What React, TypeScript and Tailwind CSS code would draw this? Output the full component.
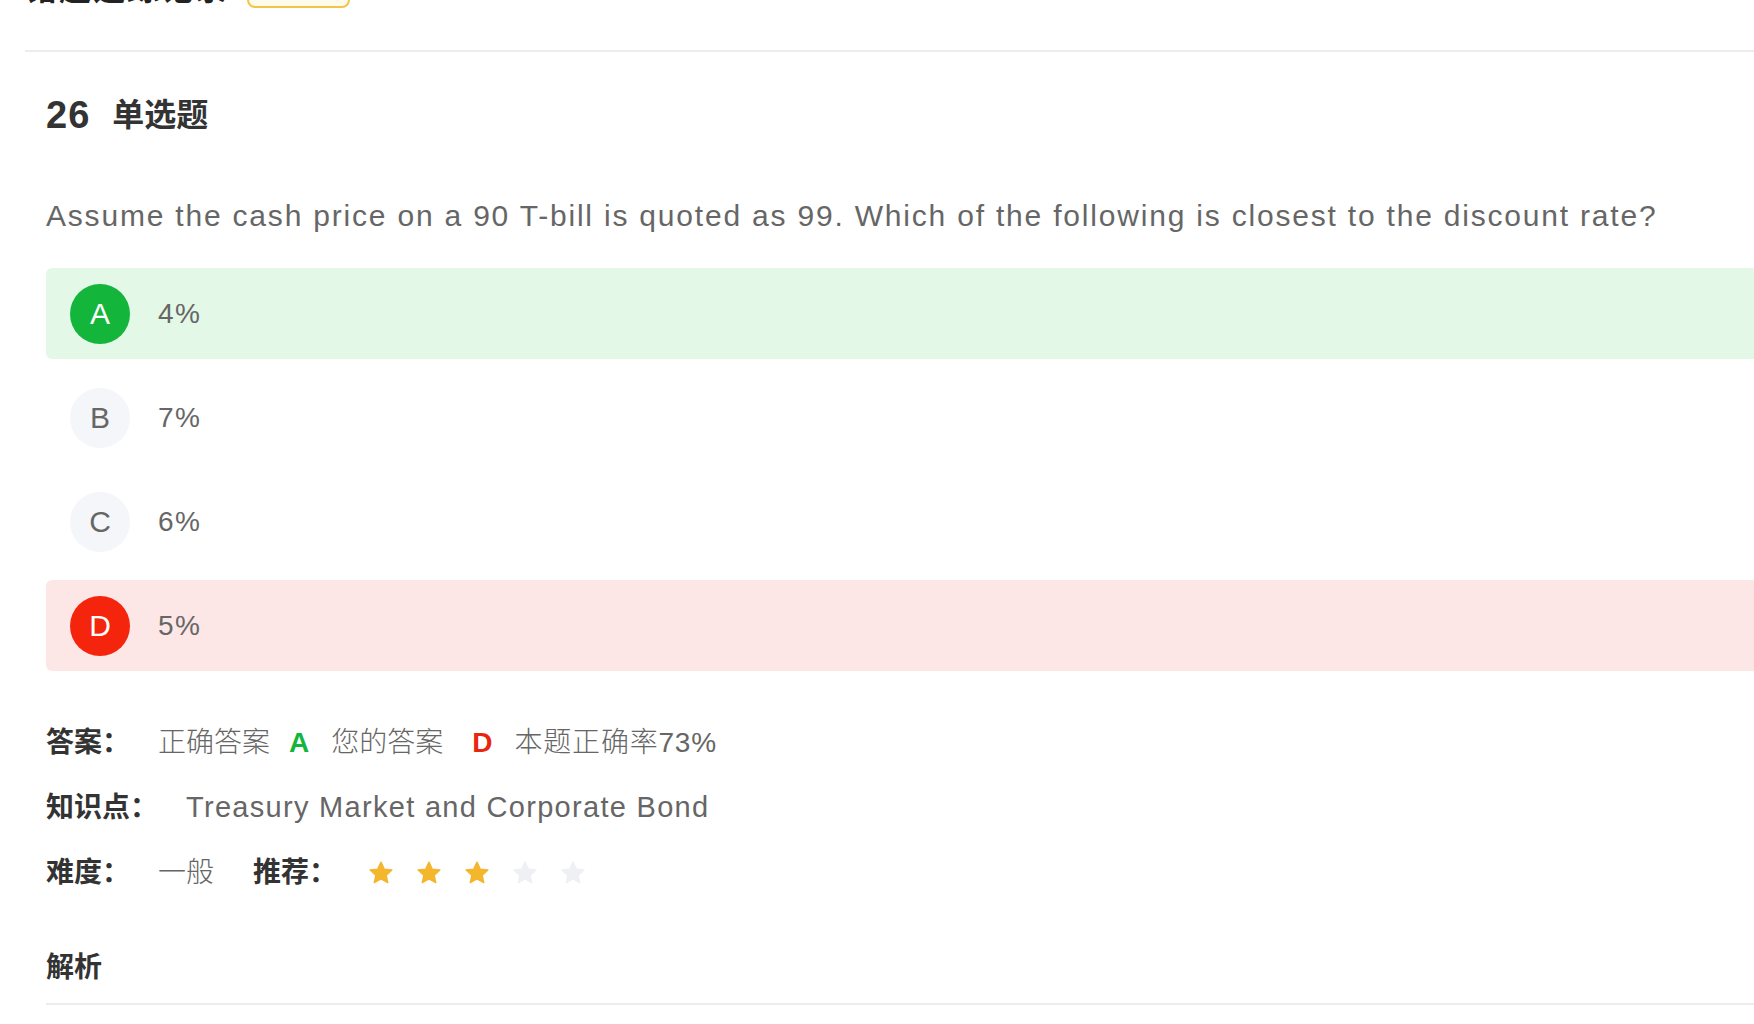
import React from "react";

interface Option {
  key: string;
  text: string;
  state: "correct" | "wrong" | "none";
}

const options: Option[] = [
  { key: "A", text: "4%", state: "correct" },
  { key: "B", text: "7%", state: "none" },
  { key: "C", text: "6%", state: "none" },
  { key: "D", text: "5%", state: "wrong" },
];

const font = {
  fontFamily: '"Liberation Sans", "Noto Sans CJK SC", sans-serif',
};

const Star = ({ on }: { on: boolean }) => (
  <svg width="28" height="28" viewBox="0 0 24 24" className="shrink-0">
    <path
      d="M12 2.6l2.75 6.05 6.6.72-4.93 4.46 1.38 6.5L12 17.05l-5.8 3.28 1.38-6.5-4.93-4.46 6.6-.72z"
      fill={on ? "#f4b62c" : "#eef0f4"}
      stroke={on ? "#f4b62c" : "#eef0f4"}
      strokeWidth="1.2"
      strokeLinejoin="round"
    />
  </svg>
);

const OptionRow = ({ item }: { item: Option }) => {
  const rowBg =
    item.state === "correct"
      ? "bg-[#e3f8e7]"
      : item.state === "wrong"
      ? "bg-[#fde7e6]"
      : "bg-white";
  const circle =
    item.state === "correct"
      ? "bg-[#13b53b] text-white"
      : item.state === "wrong"
      ? "bg-[#f5250d] text-white"
      : "bg-[#f4f6f9] text-[#666]";

  return (
    <div className={`flex h-[91px] items-center rounded-[6px] pl-[24px] ${rowBg}`}>
      <div
        className={`flex h-[60px] w-[60px] items-center justify-center rounded-full text-[30px] font-light ${circle}`}
      >
        {item.key}
      </div>
      <p className="ml-[28px] text-[28px] tracking-[1.5px] text-[#666]">{item.text}</p>
    </div>
  );
};

export default function App() {
  return (
    <div className="h-screen w-screen overflow-hidden bg-white" style={font}>
      <div className="w-[1800px]">
        {/* header, scrolled mostly out of view */}
        <div className="-mt-[30px] flex h-[38px] items-end pl-[25px]">
          <p className="mb-[3px] text-[32px] font-bold leading-[32px] tracking-[2px] text-[#222]">
            错题追踪记录
          </p>
          <div className="ml-[18px] h-[40px] w-[103px] rounded-[8px] border-2 border-[#f2c44a] bg-[#fffbea]" />
        </div>

        <div className="ml-[25px] mt-[42px] h-[2px] bg-[#ececec]" />

        <div className="pl-[46px]">
          <div className="mt-[43px] flex h-[40px] items-center text-[#333]">
            <span className="text-[38px] font-semibold tracking-[1px]">26</span>
            <span className="ml-[22px] text-[32px] font-bold">单选题</span>
          </div>

          <p className="mt-[60px] flex h-[40px] items-center text-[30px] tracking-[1.8px] text-[#666]">
            Assume the cash price on a 90 T-bill is quoted as 99. Which of the following is
            closest to the discount rate?
          </p>

          <div className="mt-[33px] flex flex-col gap-[13px]">
            {options.map((o) => (
              <OptionRow key={o.key} item={o} />
            ))}
          </div>

          <div className="mt-[52px] flex h-[40px] items-center text-[28px]">
            <span className="w-[112px] font-bold text-[#333]">答案：</span>
            <span className="font-light text-[#666]">正确答案</span>
            <span className="ml-[19px] font-bold text-[#13b53b]">A</span>
            <span className="ml-[22px] font-light text-[#666]">您的答案</span>
            <span className="ml-[29px] font-bold text-[#e8260f]">D</span>
            <span className="ml-[22px] font-light tracking-[0.8px] text-[#666]">本题正确率73%</span>
          </div>

          <div className="mt-[25px] flex h-[40px] items-center text-[28px]">
            <span className="w-[140px] font-bold text-[#333]">知识点：</span>
            <span className="text-[29px] font-light tracking-[1.3px] text-[#666]">
              Treasury Market and Corporate Bond
            </span>
          </div>

          <div className="mt-[25px] flex h-[40px] items-center text-[28px]">
            <span className="w-[112px] font-bold text-[#333]">难度：</span>
            <span className="font-light text-[#666]">一般</span>
            <span className="ml-[39px] w-[114px] font-bold text-[#333]">推荐：</span>
            <div className="flex items-center gap-[20px]">
              {[1, 2, 3, 4, 5].map((n) => (
                <Star key={n} on={n <= 3} />
              ))}
            </div>
          </div>

          <div className="mt-[55px] flex h-[40px] items-center text-[28px] font-bold text-[#333]">
            解析
          </div>

          <div className="mt-[15px] h-[2px] bg-[#ececec]" />
        </div>
      </div>
    </div>
  );
}
